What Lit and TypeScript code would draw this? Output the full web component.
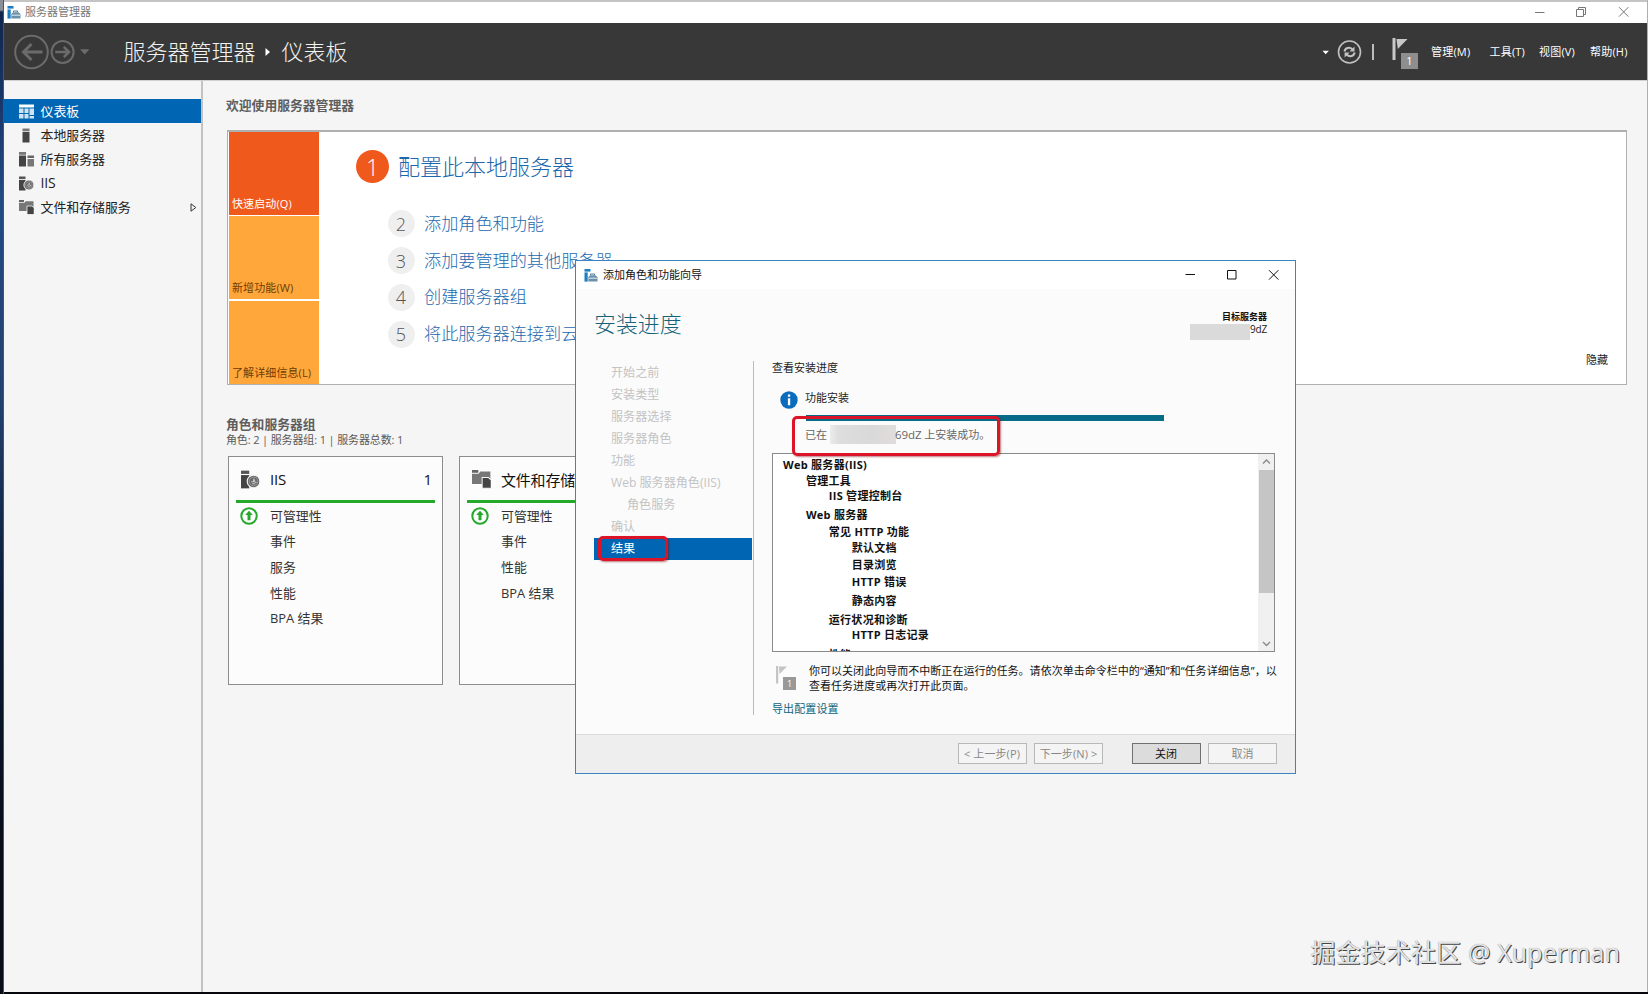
import { LitElement, html, css, svg } from "lit";
import { customElement, property } from "lit/decorators.js";
import { classMap } from "lit/directives/class-map.js";

const textBase = css`
  :host {
    font-family: "Open Sans", "Noto Sans CJK SC", sans-serif;
    font-size: 11px;
    color: #222;
    box-sizing: border-box;
  }
  *, *::before, *::after { box-sizing: border-box; }
  svg { display: block; flex: none; }
  div, span { white-space: nowrap; }
`;

const appIcon = html`<svg width="14" height="13" viewBox="0 0 14 13">
  <rect x="0.5" y="0" width="6" height="2.6" fill="#1b7fc4" />
  <rect x="0.5" y="3.4" width="3.2" height="9.2" fill="#1b7fc4" />
  <path d="M6.500 6.200V5h4v1.200" fill="none" stroke="#4a7690" stroke-width="1" />
  <path d="M4.300 8l1.900-1.800h5.200L13.500 8v4.600H4.300z" fill="#6a91a8" />
  <path d="M4.600 9.200h8.600" stroke="#e3eef4" stroke-width="1" />
</svg>`;

const shapes: Record<string, unknown> = {
  dashboard: svg`<path d="M0 .5h15v3H0z" fill="#fff"/><path d="M0 4.500h4.500v4.500H0zM0 10h4.500v4.500H0zM5.500 4.500h4v4.500h-4zM5.500 10h4v4.500h-4zM10.500 4.500H15v6.500h-4.500zM10.500 12H15v2.500h-4.500z" fill="#cfe3f3"/>`,
  local: svg`<path d="M3.500 .5h7v2.800h-7z" fill="#777"/><path d="M3.500 4h7v10.500h-7z" fill="#444"/>`,
  all: svg`<path d="M0 0h7v2.800H0z" fill="#777"/><path d="M0 3.500h7V14.500H0z" fill="#444"/><path d="M8.500 3.500H15V6H8.500z" fill="#666"/><path d="M8.500 7H15v7.500H8.500z" fill="#777"/>`,
  iis: svg`<path d="M0 .5h6.500v2.600H0z" fill="#555"/><path d="M0 4h6.500v10.500H0z" fill="#444"/><circle cx="9.900" cy="9" r="5" fill="#666" stroke="#f5f5f5" stroke-width=".9"/><circle cx="9.900" cy="9" r="3.400" fill="none" stroke="#aaa" stroke-width=".6"/><path d="M8 9.200h1.800l.4-2.400.8 2.800h1.400M8.800 10.800h2.400" fill="none" stroke="#ccc" stroke-width=".8"/>`,
  files: svg`<path d="M0 0h5v2.200H0z" fill="#666"/><path d="M0 3h5.200l1.400-1.800H14.500V11H0z" fill="#777"/><path d="M8 6h5l2.200 2v6.500H8z" fill="#444" stroke="#f5f5f5" stroke-width=".8"/>`,
};

const glyph = (name: string, size = 15) =>
  html`<svg width=${size} height=${size} viewBox="0 0 15 15">${shapes[name]}</svg>`;

@customElement("sm-topbar")
class SmTopbar extends LitElement {
  static styles = [textBase, css`
    :host { display: block; flex: none; }
    .title { height: 21px; background: #fff; display: flex; align-items: center; color: #777; padding: 0 18px 1px 3px; }
    .title span { margin-left: 4px; flex: 1; line-height: 20px; }
    .head { height: 57px; background: #383838; display: flex; align-items: center; color: #fff; padding: 1px 19px 0 8px; }
    .crumb { font-size: 22px; font-weight: 300; line-height: 30px; color: #f2f2f2; margin-top: -2px; }
    .c1 { margin-left: 28.500px; }
    .tri { margin: 0 11px 0 9px; }
    .grow { flex: 1; }
    .bell { position: relative; width: 26px; height: 31px; margin-left: 18px; }
    .badge { position: absolute; left: 9px; top: 16px; width: 17px; height: 16px; background: #8e8e8e; font-size: 11px; line-height: 16px; text-align: center; }
    .sep { width: 2px; height: 16px; background: #bdbdbd; margin-left: 10px; }
    .menu { display: grid; grid-template-columns: 58.500px 49.500px 51px 38px; margin-left: 13px; line-height: 20px; }
    .menu span { letter-spacing: 0.2px; }
  `];
  render() {
    return html`
      <div class="title">${appIcon}<span>服务器管理器</span>
        <svg width="94" height="10" viewBox="0 0 94 10" fill="none" stroke="#777">
          <path d="M0 5.500h9.500" /><path d="M41.500 2.500h7v7h-7zM43.500 2.500v-2h7v7h-2" />
          <path d="M84 .2l9.400 9.400M93.400 .2L84 9.600" />
        </svg>
      </div>
      <div class="head">
        <svg width="83" height="36" viewBox="0 0 83 36" fill="none" stroke="#6b6b6b" stroke-width="2">
          <circle cx="19.500" cy="18" r="16.300" />
          <path d="M30.500 18H11M19.500 10l-8 8 8 8" stroke-width="3" />
          <circle cx="50.600" cy="18" r="11" />
          <path d="M43.300 18h13M51.800 12.800l5.200 5.200-5.200 5.200" stroke-width="2.600" />
          <path d="M68 15.200h9.400l-4.700 5.300z" fill="#6b6b6b" stroke="none" />
        </svg>
        <span class="crumb c1">服务器管理器</span>
        <svg class="tri" width="6" height="8" viewBox="0 0 6 8"><path d="M.5 0l4.500 4-4.500 4z" fill="#fff" /></svg>
        <span class="crumb">仪表板</span>
        <div class="grow"></div>
        <svg width="40" height="26" viewBox="0 0 40 26" fill="none">
          <path d="M.5 11.800h6.400l-3.200 3.400z" fill="#fff" />
          <circle cx="27.500" cy="13" r="11" stroke="#c2c2c2" stroke-width="1.600" />
          <path d="M22.500 12.500c.5-3.500 5-5 8-2M32.600 13.500c-.5 3.500-5 5-8 2" stroke="#c2c2c2" stroke-width="2" />
          <path d="M32.500 7.500v5h-5zM22.600 18.500v-5h5z" fill="#c2c2c2" />
        </svg>
        <div class="sep"></div>
        <div class="bell">
          <svg width="16" height="24" viewBox="0 0 16 24"><path d="M.5 1h3v22h-3z" fill="#c8c8c8" /><path d="M4.500 2H15.500L5.800 12z" fill="#c8c8c8" /></svg>
          <div class="badge">1</div>
        </div>
        <div class="menu"><span>管理(M)</span><span>工具(T)</span><span>视图(V)</span><span>帮助(H)</span></div>
      </div>`;
  }
}

@customElement("sm-sidebar")
class SmSidebar extends LitElement {
  static styles = [textBase, css`
    :host { display: block; width: 199px; flex: none; border-right: 2px solid #c3c3c3; padding-top: 18px; }
    .row { display: flex; align-items: center; height: 24px; padding: 0 4px 0 15px; font-size: 12.900px; line-height: 22px; }
    .row span { flex: 1; margin: -1px 0 0 6.500px; }
    .on { background: #0066b3; color: #fff; }
    .row .latin { font-size: 14px; letter-spacing: -0.2px; }
  `];
  private rows = [
    ["dashboard", "仪表板"], ["local", "本地服务器"], ["all", "所有服务器"], ["iis", "IIS"], ["files", "文件和存储服务"],
  ];
  render() {
    return this.rows.map(([icon, label], i) => html`
      <div class=${classMap({ row: true, on: i === 0 })}>
        ${glyph(icon)}<span class=${classMap({ latin: label === "IIS" })}>${label}</span>
        ${icon === "files" ? html`<svg width="7" height="9" viewBox="0 0 7 9"><path d="M1 .8l4.800 3.700L1 8.200z" fill="none" stroke="#333" /></svg>` : ""}
      </div>`);
  }
}

@customElement("sm-welcome")
class SmWelcome extends LitElement {
  static styles = [textBase, css`
    :host { display: flex; height: 255px; border: 1px solid #b0b0b0; border-top-width: 2px; background: #fff; padding: 0 0 1px 1px; }
    .tiles { display: grid; grid-template-rows: 83px 83px 83px; gap: 1.300px; width: 90px; }
    .tile { background: #ffa73b; color: #6d3d05; display: flex; align-items: flex-end; padding: 0 0 1px 3px; line-height: 20px; letter-spacing: 0.100px; }
    .hot { background: #f0591c; color: #fff; }
    .steps { flex: 1; padding: 18px 0 0 37px; color: #1d68ad; font-weight: 300; }
    .first { display: flex; align-items: center; height: 33px; font-size: 22px; }
    .first span:last-child { margin-top: -2px; }
    .step { display: flex; align-items: center; height: 36.800px; margin-left: 31.500px; font-size: 17.150px; }
    .n { display: grid; place-items: center; border-radius: 50%; flex: none; }
    .first .n { width: 33px; height: 33px; background: #f0591c; color: #fff; font-size: 23px; margin-right: 9px; }
    .step .n { width: 27px; height: 27px; background: #efefef; color: #555; font-size: 18px; margin-right: 9.500px; }
    .first, .step, .n { line-height: 26px; }
    .rest { margin-top: 22.500px; }
    .hide { align-self: flex-end; margin: 0 18px 13px 0; line-height: 20px; }
  `];
  render() {
    return html`
      <div class="tiles">
        <div class="tile hot">快速启动(Q)</div><div class="tile">新增功能(W)</div><div class="tile">了解详细信息(L)</div>
      </div>
      <div class="steps">
        <div class="first"><span class="n">1</span><span>配置此本地服务器</span></div>
        <div class="rest">
          ${["添加角色和功能", "添加要管理的其他服务器", "创建服务器组", "将此服务器连接到云服务"].map(
            (t, i) => html`<div class="step"><span class="n">${i + 2}</span>${t}</div>`)}
        </div>
      </div>
      <div class="hide">隐藏</div>`;
  }
}

@customElement("sm-role-card")
class SmRoleCard extends LitElement {
  @property() icon = "";
  @property() name = "";
  @property({ type: Array }) items: string[] = [];
  static styles = [textBase, css`
    :host { display: block; width: 215px; height: 229px; border: 1px solid #8c8c8c; background: #fcfcfc; padding: 0 7px; color: #333; }
    .head { display: flex; align-items: center; height: 46px; border-bottom: 3px solid #25a92b; padding: 1px 3px 0 5px; font-size: 15px; color: #111; }
    .head span:first-of-type { flex: 1; margin-left: 10px; letter-spacing: -0.2px; }
    .body { padding-top: 0.500px; }
    .item { height: 25.700px; line-height: 25.700px; display: grid; grid-template-columns: 34px 1fr; align-items: center; font-size: 12.900px; }
    .ok { margin-left: 4px; }
  `];
  render() {
    return html`
      <div class="head">${glyph(this.icon, 19)}<span>${this.name}</span><span>1</span></div>
      <div class="body">
        ${this.items.map((t, i) => html`<div class="item">
          <span>${i === 0 ? html`<svg class="ok" width="18" height="18" viewBox="0 0 18 18">
            <circle cx="9" cy="9" r="7.700" fill="#fff" stroke="#25a92b" stroke-width="2" />
            <path d="M9 3.800l3.800 4.200h-2.300v5.200h-3V8H5.200z" fill="#25a92b" /></svg>` : ""}</span>
          <span>${t}</span></div>`)}
      </div>`;
  }
}

@customElement("sm-wizard")
class SmWizard extends LitElement {
  static styles = [textBase, css`
    :host { display: flex; flex-direction: column; width: 721px; height: 514px; border: 1px solid #3c83c3; background: #fbfbfb; }
    .bar { height: 28px; background: #fff; display: flex; align-items: center; padding: 0 16px 0 8px; color: #111; }
    .bar span { flex: 1; margin-left: 5px; line-height: 28px; }
    .top { display: flex; justify-content: space-between; height: 72px; padding: 18px 28px 0 18px; }
    .h { font-size: 21.900px; font-weight: 300; color: #176478; line-height: 34px; }
    .target { text-align: right; font-size: 9px; line-height: 12px; padding-top: 4px; color: #222; }
    .target b { display: block; color: #111; }
    .srv { display: flex; justify-content: flex-end; font-size: 10px; letter-spacing: -0.2px; line-height: 13px; }
    .mask { background: #dadada; }
    .srv .mask { width: 60px; height: 16px; margin: 1px 0 0; }
    .mid { display: flex; flex: 1; }
    .nav { position: relative; width: 160px; margin-bottom: 19px; padding: 1px 1px 0 0; margin-left: 18px; border-right: 1px solid #bbb; }
    .step { height: 22px; line-height: 22.500px; font-size: 12.100px; color: #c3c3c3; padding-left: 17px; }
    .sub { padding-left: 33px; }
    .on { background: #0066b3; color: #fff; }
    .mark { position: absolute; border: 3px solid #dc1428; border-radius: 5px; box-shadow: 1px 1px 2px rgba(120, 0, 0, 0.5); }
    .mark-nav { left: 4px; top: 175px; width: 70px; height: 25px; }
    .pane { flex: 1; padding: 0 18px; position: relative; }
    .cap { line-height: 16px; margin-top: -1px; }
    .feat { display: grid; grid-template-columns: 33px 1fr; margin-top: 13px; line-height: 18px; }
    .feat svg { margin: 2px 0 0 8px; }
    .prog { height: 6px; background: #066c87; width: 358px; margin: 6px 0 0 34px; }
    .done { display: flex; align-items: center; height: 20px; margin: 4px 0 8px 33px; color: #666; line-height: 20px; }
    .done .mask { width: 66px; height: 19px; margin: -2px 0 0 3px; background: linear-gradient(90deg, #ececec, #dedede 12%, #d9d9d9 60%, #e0dcdc); }
    .done .id { letter-spacing: -0.1px; margin-left: -1px; font-size: 11.500px; }
    .mark-done { left: 38px; top: 55px; width: 208px; height: 40px; }
    .list { display: flex; width: 503px; height: 199px; border: 1px solid #8a8a8a; background: #fff; overflow: hidden; }
    .tree { flex: 1; padding: 3px 0 0 10px; font-weight: 700; color: #111; overflow: hidden; letter-spacing: 0.28px; }
    .node { line-height: 16px; height: 16px; }
    .scroll { width: 16px; background: #f0f0f0; display: flex; flex-direction: column; align-items: center; justify-content: space-between; }
    .arrow { height: 16px; }
    .thumb { width: 15px; height: 123px; background: #c5c5c5; margin-bottom: auto; }
    .note { display: grid; grid-template-columns: 37px 1fr; margin-top: 12px; line-height: 14.500px; color: #111; }
    .say { letter-spacing: 0.030px; }
    .flag { position: relative; margin: 2px 0 0 4px; width: 20px; height: 24px; }
    .badge { position: absolute; left: 7px; top: 11px; width: 13px; height: 13px; background: #999; color: #fff; font-size: 9px; line-height: 13px; text-align: center; }
    .link { color: #0d6680; margin-top: 8px; line-height: 16px; letter-spacing: 0.1px; }
    .foot { display: flex; justify-content: flex-end; align-items: center; height: 39px; border-top: 1px solid #dcdcdc; background: #eee; padding: 0 18px 1px 0; gap: 7.500px; }
    .btn { width: 69px; height: 21px; border: 1px solid #b8b8b8; background: #f4f4f4; color: #888; text-align: center; line-height: 19px; letter-spacing: 0.1px; }
    .live { border-color: #707070; background: #dcdcdc; color: #111; margin-left: 21px; }
  `];
  private steps = ["开始之前", "安装类型", "服务器选择", "服务器角色", "功能", "Web 服务器角色(IIS)", "角色服务", "确认", "结果"];
  private tree: [string, number, number][] = [
    ["Web 服务器(IIS)", 0, 0], ["管理工具", 1, -0.5], ["IIS 管理控制台", 2, -0.5], ["Web 服务器", 1, 3],
    ["常见 HTTP 功能", 2, 1], ["默认文档", 3, -0.5], ["目录浏览", 3, 1.5], ["HTTP 错误", 3, 1],
    ["静态内容", 3, 3], ["运行状况和诊断", 2, 3], ["HTTP 日志记录", 3, -1], ["性能", 2, 4],
  ];
  render() {
    return html`
      <div class="bar">${appIcon}<span>添加角色和功能向导</span>
        <svg width="94" height="10" viewBox="0 0 94 10" fill="none" stroke="#111">
          <path d="M.5 4.500h9.500" /><path d="M42.500 .5h8.500v8.500h-8.500z" /><path d="M84 .2l9.400 9.400M93.400 .2L84 9.600" />
        </svg></div>
      <div class="top"><div class="h">安装进度</div>
        <div class="target"><b>目标服务器</b><div class="srv"><span class="mask"></span>9dZ</div></div></div>
      <div class="mid">
        <div class="nav">
          ${this.steps.map((t, i) => html`<div class=${classMap({ step: true, sub: i === 6, on: i === 8 })}>${t}</div>`)}
          <div class="mark mark-nav"></div>
        </div>
        <div class="pane">
          <div class="cap">查看安装进度</div>
          <div class="feat"><svg width="18" height="18" viewBox="0 0 18 18"><circle cx="9" cy="9" r="8.700" fill="#0a6cbd" />
            <path d="M7.900 3.600h2.300v2.200H7.900zM7.900 7.200h2.300v7H7.900z" fill="#fff" /></svg><span>功能安装</span></div>
          <div class="prog"></div>
          <div class="done">已在<span class="mask"></span><span class="id">69dZ</span>&nbsp;上安装成功。</div>
          <div class="mark mark-done"></div>
          <div class="list">
            <div class="tree">${this.tree.map(([t, d, gap]) =>
              html`<div class="node" style="margin-left:${d * 22.9}px;margin-top:${gap}px">${t}</div>`)}</div>
            <div class="scroll">
              <svg class="arrow" width="9" height="16" viewBox="0 0 9 10"><path d="M1 6.500l3.500-3.500L8 6.500" fill="none" stroke="#888" stroke-width="1.300" /></svg>
              <div class="thumb"></div>
              <svg class="arrow" width="9" height="16" viewBox="0 0 9 10"><path d="M1 4l3.500 3.500L8 4" fill="none" stroke="#888" stroke-width="1.300" /></svg>
            </div>
          </div>
          <div class="note">
            <div class="flag"><svg width="14" height="18" viewBox="0 0 14 18"><path d="M0 0h2.200v17.500H0zM3 .5h8L3.500 8z" fill="#c4c4c4" /></svg><div class="badge">1</div></div>
            <div class="say">你可以关闭此向导而不中断正在运行的任务。请依次单击命令栏中的“通知”和“任务详细信息”，以<br />查看任务进度或再次打开此页面。</div>
          </div>
          <div class="link">导出配置设置</div>
        </div>
      </div>
      <div class="foot">
        <div class="btn">&lt; 上一步(P)</div><div class="btn">下一步(N) &gt;</div><div class="btn live">关闭</div><div class="btn">取消</div>
      </div>`;
  }
}

@customElement("app-root")
class AppRoot extends LitElement {
  static styles = [textBase, css`
    :host { display: flex; position: relative; width: 1648px; height: 994px; overflow: hidden; background: #05070c; }
    .desk { width: 4px; flex: none; border-right: 1px solid #2c5c8e; background: linear-gradient(#8a9099 0 10px, #10254d 12px, #234a86 20%, #23406f 40%, #0a1c38 60%, #070d18 85%); }
    .win { display: flex; flex-direction: column; width: 1643px; height: 992px; background: #f5f5f5; border-top: 2px solid #c4c4c4; }
    .edge { width: 1px; background: #b0b0b0; height: 992px; }
    .work { display: flex; flex: 1; border-top: 1px solid #d0d0d0; }
    .main { flex: 1; padding: 14px 20px 0 23px; color: #595959; }
    .t { font-size: 12.800px; font-weight: 600; line-height: 20px; color: #5e5e5e; }
    .panel { margin: 15px 0 0 1px; }
    .roles { margin-top: 29px; }
    .meta { line-height: 14px; margin-top: -1px; letter-spacing: -0.130px; }
    .cards { display: flex; gap: 16px; margin: 9px 0 0 2px; }
    .dialog { position: absolute; left: 575px; top: 260px; }
    .credit { position: absolute; left: 1310.500px; top: 934px; font-size: 25px; letter-spacing: 0.15px; line-height: 36px; color: #e4e4e4; text-shadow: 1px 1px 0 #444, 0 0 1px #888; }
  `];
  render() {
    return html`
      <div class="desk"></div>
      <div class="win">
        <sm-topbar></sm-topbar>
        <div class="work">
          <sm-sidebar></sm-sidebar>
          <div class="main">
            <div class="t">欢迎使用服务器管理器</div>
            <sm-welcome class="panel"></sm-welcome>
            <div class="t roles">角色和服务器组</div>
            <div class="meta">角色: 2 | 服务器组: 1 | 服务器总数: 1</div>
            <div class="cards">
              <sm-role-card icon="iis" name="IIS" .items=${["可管理性", "事件", "服务", "性能", "BPA 结果"]}></sm-role-card>
              <sm-role-card icon="files" name="文件和存储服务" .items=${["可管理性", "事件", "性能", "BPA 结果"]}></sm-role-card>
            </div>
          </div>
        </div>
      </div>
      <div class="edge"></div>
      <sm-wizard class="dialog"></sm-wizard>
      <div class="credit">掘金技术社区 @ Xuperman</div>`;
  }
}
